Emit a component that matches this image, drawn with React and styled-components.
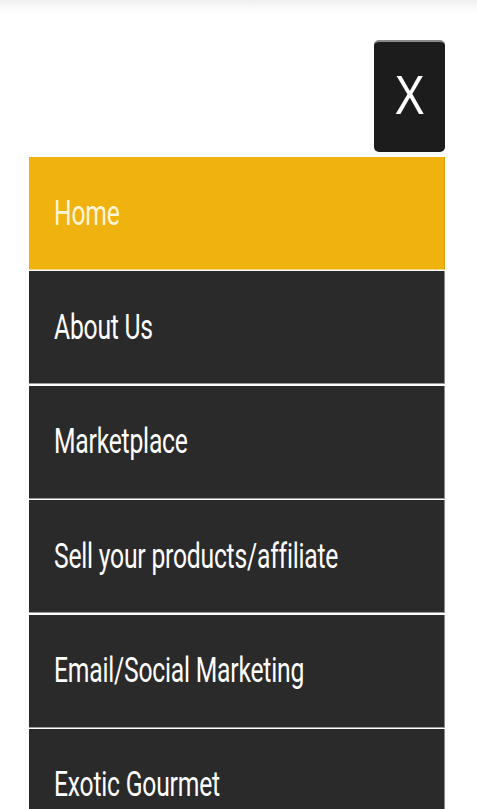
import React from 'react'
import styled, { createGlobalStyle } from 'styled-components'

const Global = createGlobalStyle`
  html, body {
    margin: 0;
    padding: 0;
    background: #fff;
    font-family: Roboto, "Liberation Sans", sans-serif;
  }
`;

const Page = styled.div`
    width: 477px;
    min-height: 809px;
    height: 809px;
    overflow: hidden;
    box-sizing: border-box;
    padding: 40px 32px 0 29px;
    background: linear-gradient(#efefef 0, #fafafa 8px, #fff 14px);
    display: flex;
    flex-direction: column;
`;

const Top = styled.div`
    display: flex;
    justify-content: flex-end;
    margin-bottom: 5px;
`;

const Close = styled.button`
    width: 71px;
    height: 112px;
    border: none;
    border-top: 2px solid #8a8a8a;
    border-radius: 5px;
    background: #1c1c1c;
    display: flex;
    align-items: center;
    justify-content: center;
    padding: 0 0 5px;
    cursor: pointer;
`;

const CloseMark = styled.span`
    display: inline-block;
    color: #fff;
    font-size: 56px;
    font-weight: 300;
    line-height: 1;
    transform: scaleX(0.8);
`;

const Menu = styled.ul`
    list-style: none;
    margin: 0;
    padding: 0;
    display: flex;
    flex-direction: column;
    gap: 1.4px;
`;

const Item = styled.li`
    height: 113px;
    flex-shrink: 0;
    box-sizing: border-box;
    background: ${p => (p.active ? '#efb20e' : '#2a2a2a')};
    border-right: 1px solid ${p => (p.active ? '#d9a10c' : '#8a8a8a')};
    border-bottom: 1px solid ${p => (p.active ? '#f5d67a' : '#9a9a9a')};
    display: flex;
    align-items: center;
    padding: 0 0 0 25px;
`;

const Label = styled.a`
    display: inline-block;
    color: ${p => (p.active ? '#fff6d8' : '#fff')};
    text-decoration: none;
    font-size: 35px;
    font-weight: 400;
    letter-spacing: -0.3px;
    white-space: nowrap;
    transform: scaleX(0.705);
    transform-origin: left center;
`;

const links = [
    'Home',
    'About Us',
    'Marketplace',
    'Sell your products/affiliate',
    'Email/Social Marketing',
    'Exotic Gourmet',
];

export default function App() {
    return (
        <>
            <Global />
            <Page>
                <Top>
                    <Close aria-label="Close menu">
                        <CloseMark>X</CloseMark>
                    </Close>
                </Top>
                <Menu>
                    {links.map((l, i) => (
                        <Item key={l} active={i === 0}>
                            <Label href="#" active={i === 0}>{l}</Label>
                        </Item>
                    ))}
                </Menu>
            </Page>
        </>
    )
}
